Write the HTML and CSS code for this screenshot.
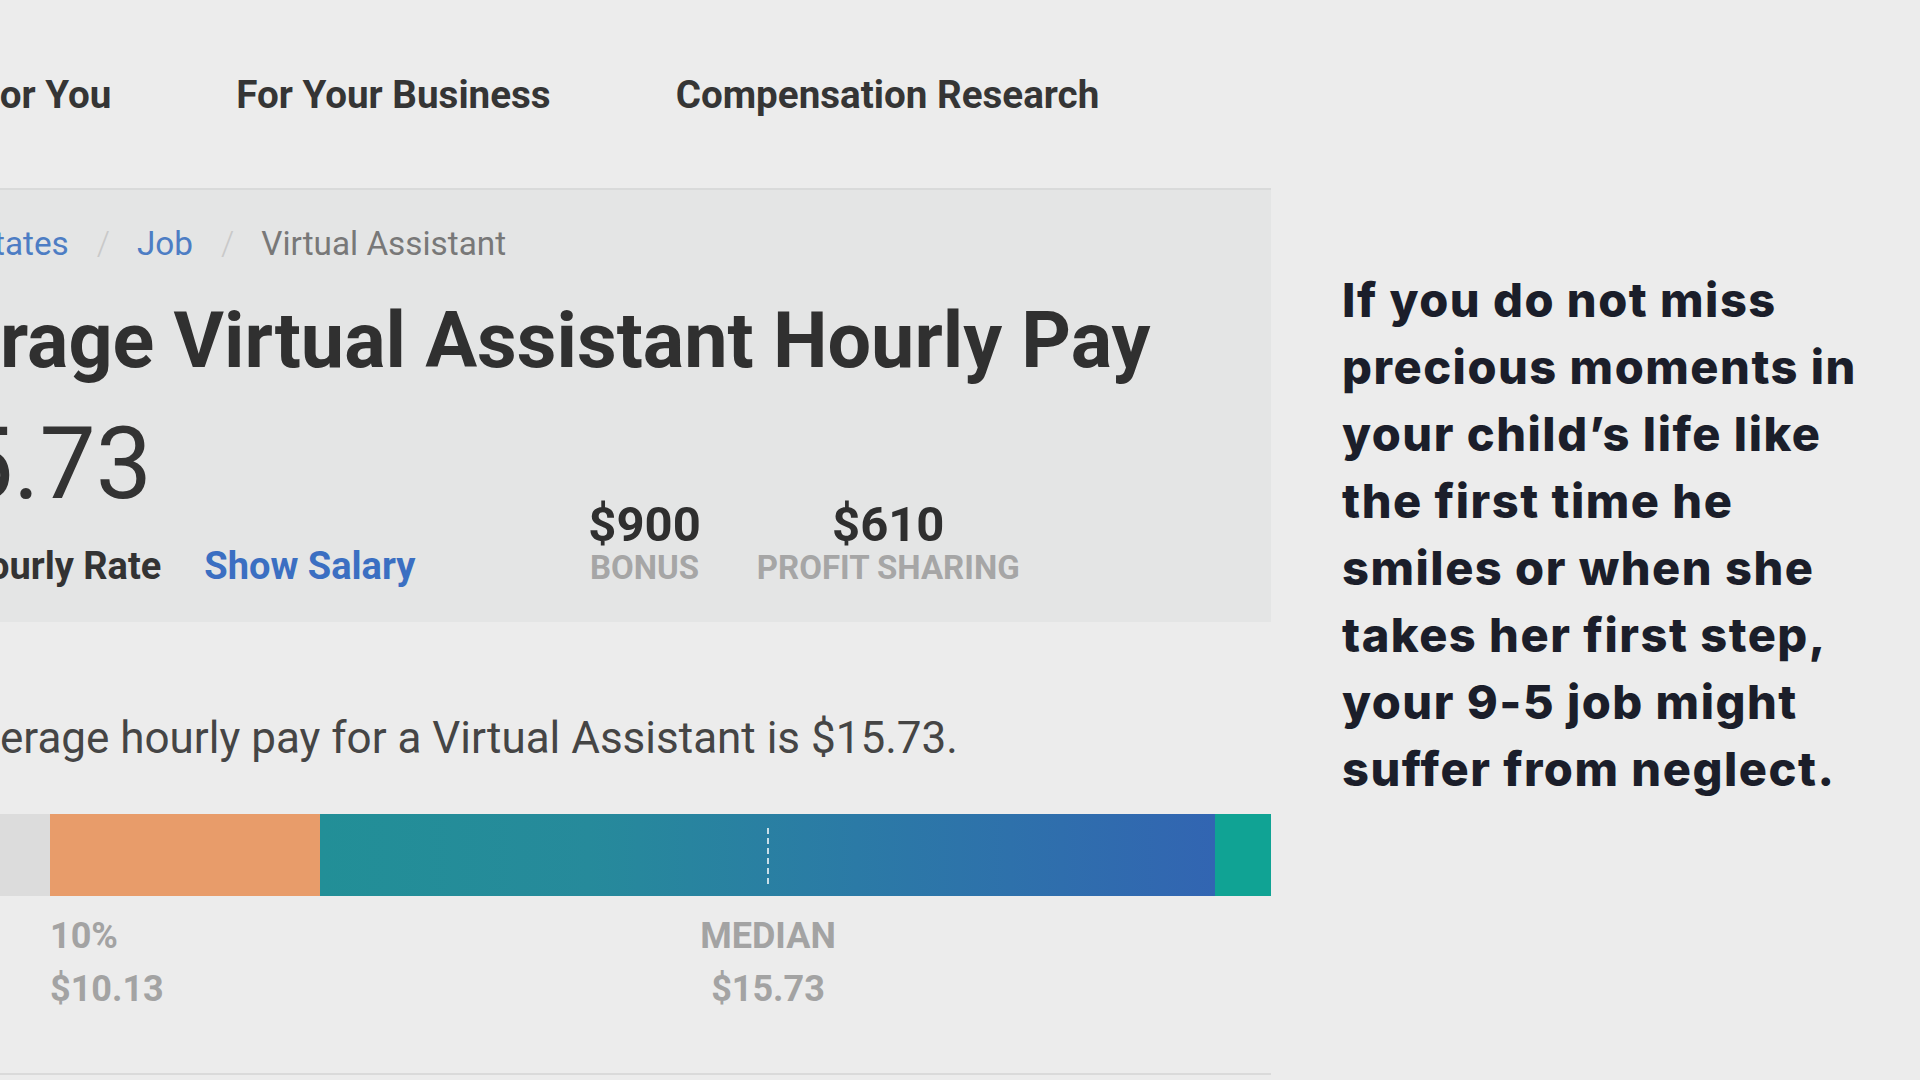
FILE: index.html
```html
<!DOCTYPE html>
<html lang="en">
<head>
<meta charset="utf-8">
<title>Virtual Assistant Hourly Pay</title>
<link rel="stylesheet" href="styles.css">
</head>
<body>
<div class="screen">
  <main class="page">
    <nav class="nav">
      <a class="nav-item nav-first">For You</a>
      <a class="nav-item">For Your Business</a>
      <a class="nav-item">Compensation Research</a>
    </nav>

    <section class="hero">
      <div class="crumbs">
        <a class="crumb-link crumb-first">tates</a>
        <span class="crumb-sep">/</span>
        <a class="crumb-link">Job</a>
        <span class="crumb-sep">/</span>
        <span class="crumb-current">Virtual Assistant</span>
      </div>
      <h1 class="title">rage Virtual Assistant Hourly Pay</h1>
      <div class="hero-bottom">
        <div class="rate-block">
          <div class="price">5.73</div>
          <div class="rate-row">
            <span class="rate-label">ourly Rate</span>
            <a class="show-salary">Show Salary</a>
          </div>
        </div>
        <div class="stats">
          <div class="stat stat-bonus">
            <div class="stat-value">$900</div>
            <div class="stat-label">BONUS</div>
          </div>
          <div class="stat stat-profit">
            <div class="stat-value">$610</div>
            <div class="stat-label">PROFIT SHARING</div>
          </div>
        </div>
      </div>
    </section>

    <p class="summary">erage hourly pay for a Virtual Assistant is $15.73.</p>

    <div class="bar">
      <div class="seg seg-grey"></div>
      <div class="seg seg-orange"></div>
      <div class="seg seg-main"></div>
      <div class="seg seg-teal"></div>
      <div class="median-mark"></div>
    </div>

    <div class="bar-labels">
      <div class="bar-label bar-label-low">
        <div>10%</div>
        <div>$10.13</div>
      </div>
      <div class="bar-label bar-label-median">
        <div>MEDIAN</div>
        <div>$15.73</div>
      </div>
    </div>

    <div class="bottom-rule"></div>
  </main>

  <aside class="quote">
    <p class="quote-text">If you do not miss<br>precious moments in<br>your child’s life like<br>the first time he<br>smiles or when she<br>takes her first step,<br>your 9-5 job might<br>suffer from neglect.</p>
  </aside>
</div>
</body>
</html>
```

FILE: styles.css
```css
* { box-sizing: border-box; }

html, body {
  margin: 0;
  padding: 0;
  background: #ececec;
}

body {
  width: 1920px;
  height: 1080px;
  overflow: hidden;
  font-family: Roboto, "Liberation Sans", Arial, sans-serif;
  color: #333333;
}

.screen {
  display: flex;
  width: 1920px;
  height: 1080px;
  overflow: hidden;
}

.page {
  width: 1271px;
  flex: none;
  overflow: hidden;
  display: flex;
  flex-direction: column;
}

/* NAV */
.nav {
  height: 188px;
  padding-top: 72px;
  display: flex;
  gap: 125px;
  white-space: nowrap;
}
.nav-item {
  font-size: 38.6px;
  line-height: 45px;
  font-weight: 700;
  color: #353535;
}
.nav-first { margin-left: -21px; }

/* HERO PANEL */
.hero {
  background: #e4e5e5;
  border-top: 2px solid #d9dada;
  padding: 34px 0 34px 0;
  display: flex;
  flex-direction: column;
}
.crumbs {
  display: flex;
  align-items: baseline;
  font-size: 33.3px;
  line-height: 40px;
  white-space: nowrap;
}
.crumb-first { margin-left: -6px; }
.crumb-link { color: #4d7dc4; }
.crumb-sep { color: #c9c9c9; margin: 0 27px 0 28px; font-weight: 300; }
.crumb-current { color: #787878; }

.title {
  margin: 31px 0 0 0;
  font-size: 77.3px;
  line-height: 92px;
  font-weight: 700;
  color: #303030;
  white-space: nowrap;
}

.hero-bottom {
  display: flex;
  align-items: flex-end;
  margin-top: 18px;
}
.rate-block { display: flex; flex-direction: column; }
.price {
  font-size: 100px;
  line-height: 118px;
  font-weight: 400;
  color: #333333;
  margin-left: -43px;
  white-space: nowrap;
}
.rate-row {
  display: flex;
  gap: 43px;
  margin-top: 21px;
  white-space: nowrap;
}
.rate-label,
.show-salary {
  font-size: 38px;
  line-height: 44px;
  font-weight: 700;
}
.rate-label { color: #333333; margin-left: -12px; }
.show-salary { color: #3b6fc2; }

.stats {
  display: flex;
  gap: 56px;
  margin-left: 173px;
}
.stat {
  display: flex;
  flex-direction: column;
  align-items: center;
  white-space: nowrap;
}
.stat-value {
  font-size: 49px;
  line-height: 46px;
  font-weight: 700;
  color: #2f2f2f;
}
.stat-label {
  font-size: 33px;
  line-height: 40px;
  font-weight: 700;
  color: #a6a6a6;
}

/* SUMMARY */
.summary {
  margin: 90px 0 0 0;
  font-size: 44px;
  line-height: 52px;
  color: #454545;
  white-space: nowrap;
}

/* BAR */
.bar {
  position: relative;
  margin-top: 50px;
  height: 82px;
  display: flex;
}
.seg { height: 100%; }
.seg-grey { width: 50px; background: #dcdcdc; }
.seg-orange { width: 270px; background: #e89c6a; }
.seg-main {
  width: 895px;
  background: linear-gradient(90deg, #228f97 0%, #268a9b 30%, #2b7aa6 60%, #3265b2 100%);
}
.seg-teal { flex: 1; background: #10a394; }
.median-mark {
  position: absolute;
  left: 767px;
  top: 14px;
  height: 56px;
  border-left: 2px dashed rgba(255, 255, 255, 0.75);
}

.bar-labels {
  display: flex;
  margin-top: 14px;
}
.bar-label {
  font-size: 36px;
  line-height: 53px;
  font-weight: 700;
  color: #a3a3a3;
  white-space: nowrap;
}
.bar-label-low { margin-left: 50px; width: 150px; }
.bar-label-median {
  width: 200px;
  margin-left: 468px;
  text-align: center;
}

.bottom-rule {
  margin-top: auto;
  margin-bottom: 5px;
  height: 2px;
  background: #dadada;
}

/* QUOTE */
.quote {
  flex: 1;
  padding: 266px 0 0 71px;
}
.quote-text {
  margin: 0;
  font-family: Inter, "Noto Sans", sans-serif;
  font-weight: 800;
  font-size: 47px;
  line-height: 67px;
  letter-spacing: 1.5px;
  color: #1b1e2a;
  white-space: nowrap;
}
```
